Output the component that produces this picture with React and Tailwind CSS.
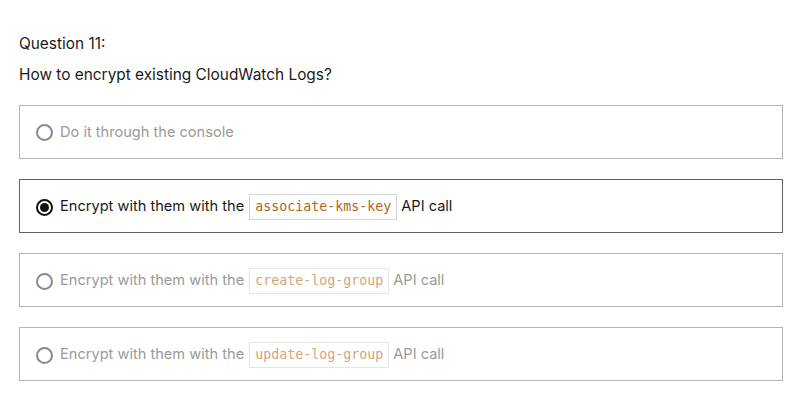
import React from 'react';

const OPTIONS = [
  { id: 'a', text: 'Do it through the console' },
  { id: 'b', pre: 'Encrypt with them with the', code: 'associate-kms-key', post: 'API call' },
  { id: 'c', pre: 'Encrypt with them with the', code: 'create-log-group', post: 'API call' },
  { id: 'd', pre: 'Encrypt with them with the', code: 'update-log-group', post: 'API call' },
];

function Radio({ checked }) {
  return (
    <span
      className={`flex items-center justify-center w-[17px] h-[17px] rounded-full border-2 shrink-0 ${
        checked ? 'border-[#111]' : 'border-[#8a8a8a]'
      }`}
    >
      {checked && <span className="w-[9px] h-[9px] rounded-full bg-[#111]" />}
    </span>
  );
}

export default function App() {
  const selected = 'b';

  return (
    <div className="w-[797px] h-[404px] bg-white px-[19px] pt-[32px] font-['Inter',sans-serif] text-[15.4px] text-[#1a1a1a]">
      <p className="leading-[24px]">Question 11:</p>
      <p className="leading-[24px] mt-[7px]">How to encrypt existing CloudWatch Logs?</p>

      <div className="flex flex-col gap-[20px] mt-[18px] w-[764px] text-[14.6px]">
        {OPTIONS.map(opt => {
          const active = opt.id === selected;
          return (
            <div
              key={opt.id}
              className={`flex items-center h-[54px] border pl-[16px] pt-[2px] ${
                active ? 'border-[#5f6366]' : 'border-[#b4b4b4]'
              }`}
            >
              <div className={`flex items-center gap-[7px] ${active ? 'text-[#1a1a1a]' : 'text-[#9a9a9a]'}`}>
                <Radio checked={active} />
                {opt.text ? (
                  <span>{opt.text}</span>
                ) : (
                  <span className="flex items-center">
                    {opt.pre}
                    <code
                      className={`ml-[5px] mr-[4px] px-[5px] h-[26px] flex items-center border font-['DejaVu_Sans_Mono',monospace] text-[13.3px] ${
                        active ? 'border-[#d4d4d4] text-[#b0661c]' : 'border-[#e6e6e6] text-[#d6a476]'
                      }`}
                    >
                      {opt.code}
                    </code>
                    {opt.post}
                  </span>
                )}
              </div>
            </div>
          );
        })}
      </div>
    </div>
  );
}
